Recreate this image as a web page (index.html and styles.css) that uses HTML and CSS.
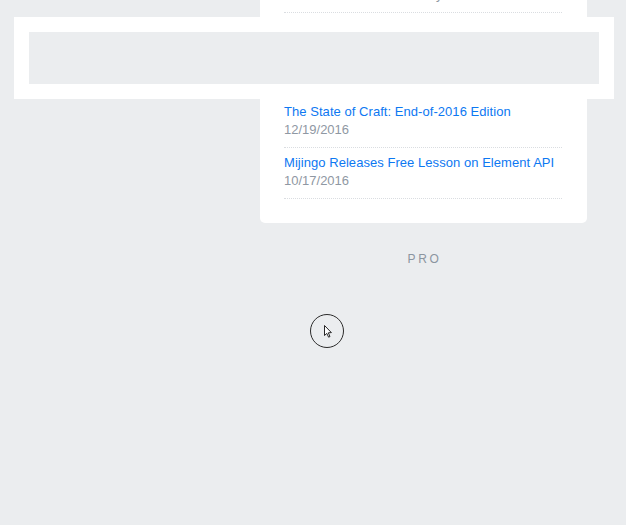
FILE: index.html
```html
<!DOCTYPE html>
<html>
<head>
<meta charset="utf-8">
<link rel="stylesheet" href="styles.css">
</head>
<body>
<div class="page">
  <div class="sidebar"></div>
  <div class="main">
    <div class="card">
      <div class="item">
        <a class="title" href="#">Craft 2.6.2958 Released</a>
        <div class="date">01/09/2017<span class="extra">Tuesday</span></div>
      </div>
      <div class="item item-tall">
        <a class="title" href="#">Craft Commerce 1.2.1360 Released with Important Fixes and Improvements</a>
        <div class="date">01/03/2017</div>
      </div>
      <div class="item">
        <a class="title" href="#">The State of Craft: End-of-2016 Edition</a>
        <div class="date">12/19/2016</div>
      </div>
      <div class="item">
        <a class="title" href="#">Mijingo Releases Free Lesson on Element API</a>
        <div class="date">10/17/2016</div>
      </div>
    </div>
    <div class="edition">PRO</div>
  </div>
</div>

<div class="drag-helper"><div class="placeholder"></div></div>

<div class="cursor">
  <svg width="36" height="36" viewBox="0 0 36 36">
    <circle cx="18" cy="18" r="16.5" fill="none" stroke="#2b2b2b" stroke-width="1"/>
    <path d="M15.5 12.5 L15.5 22.5 L17.8 20.4 L19.6 24.2 L21 23.5 L19.3 19.8 L22.4 19.6 Z" fill="#fff" stroke="#111" stroke-width="0.9" stroke-linejoin="round"/>
  </svg>
</div>
</body>
</html>
```

FILE: styles.css
```css
html, body {
  margin: 0;
  padding: 0;
}

body {
  background: #ebedef;
  font-family: "Liberation Sans", Arial, Helvetica, sans-serif;
  font-size: 13px;
  height: 525px;
  overflow: hidden;
  position: relative;
}

.page {
  display: grid;
  grid-template-columns: 260px 327px;
}

.main {
  display: flex;
  flex-direction: column;
}

.card {
  background: #fff;
  border-radius: 5px;
  margin-top: -62px;
  padding: 24px 25px 24px 24px;
  display: flex;
  flex-direction: column;
}

.item {
  display: flex;
  flex-direction: column;
  padding: 6px 0 8px;
  border-bottom: 1px dotted #dadde1;
}

.item-tall {
  padding-bottom: 23px;
}

.title {
  color: #0d78f2;
  text-decoration: none;
  line-height: 18px;
  letter-spacing: 0.05px;
}

.date {
  color: #8f98a3;
  line-height: 18px;
}

.extra {
  margin-left: 44px;
}

.edition {
  margin-top: 28px;
  text-align: center;
  font-size: 12px;
  line-height: 16px;
  letter-spacing: 2.6px;
  color: #8b95a0;
  padding-left: 2px;
}

.drag-helper {
  position: absolute;
  left: 14px;
  top: 17px;
  width: 570px;
  height: 52px;
  padding: 15px;
  background: #fff;
}

.placeholder {
  width: 100%;
  height: 100%;
  background: #ebedef;
}

.cursor {
  position: absolute;
  left: 309px;
  top: 313px;
  width: 36px;
  height: 36px;
}

.cursor svg {
  display: block;
}
```
